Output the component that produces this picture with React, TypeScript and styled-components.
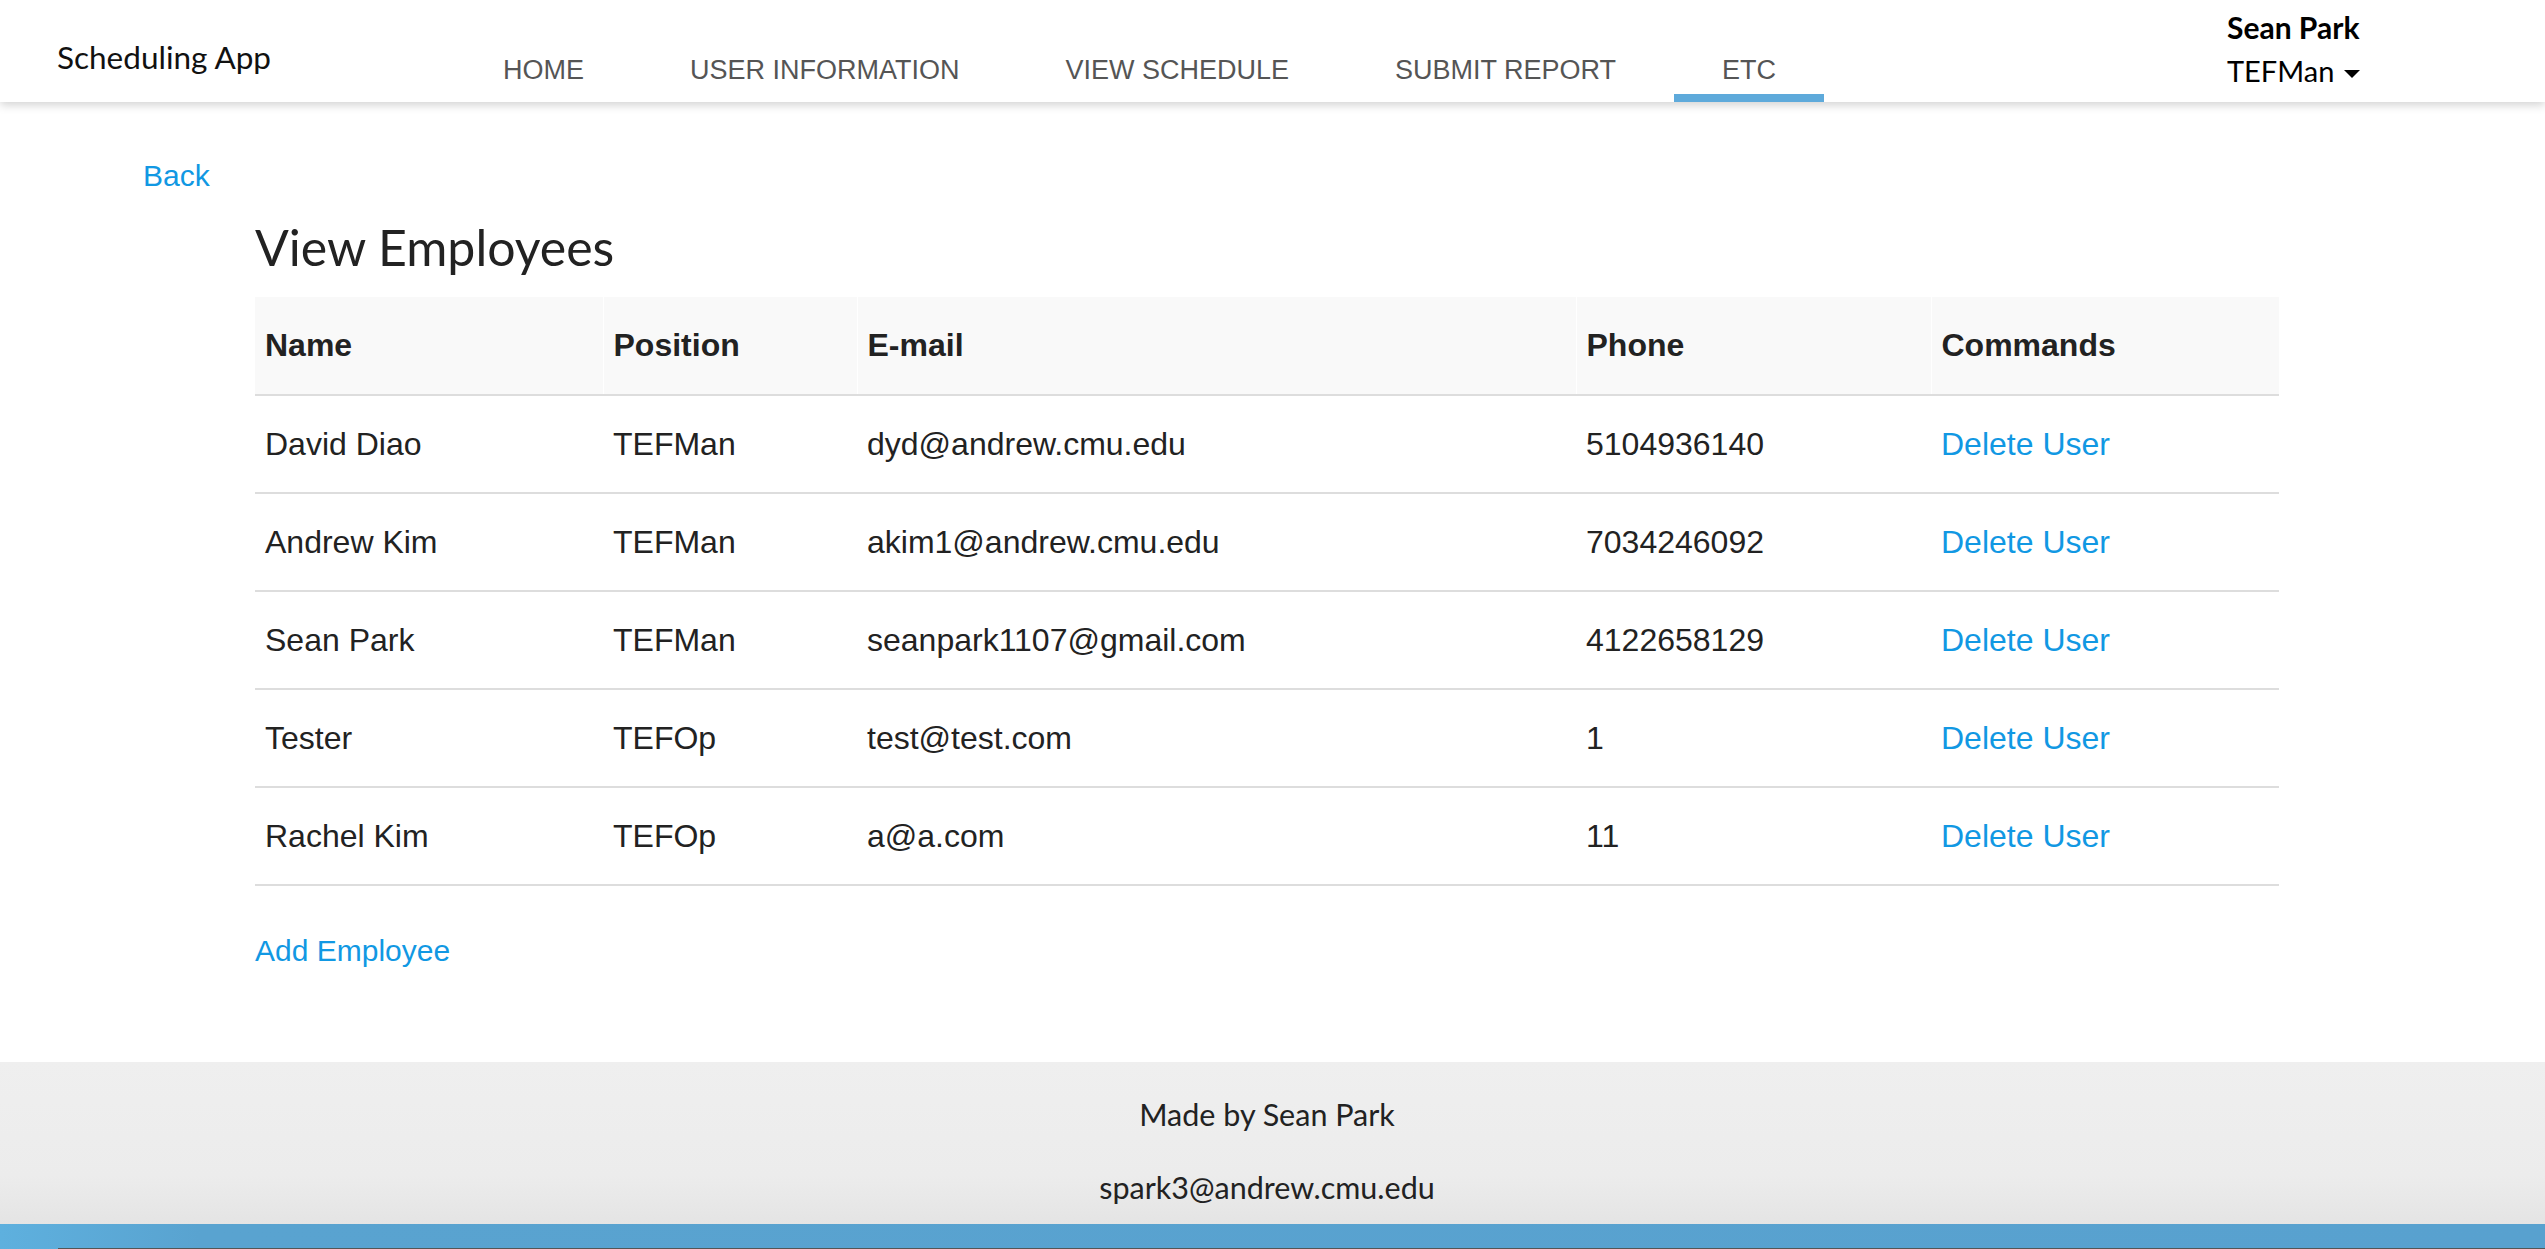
import React from "react";
import styled, { createGlobalStyle } from "styled-components";

const GlobalStyle = createGlobalStyle`
  html, body { margin: 0; padding: 0; background: #ffffff; }
  body { font-family: "Liberation Sans", Arial, sans-serif; color: #222; }
  * { box-sizing: border-box; }
`;

const Page = styled.div`
  min-height: 100vh;
  display: flex;
  flex-direction: column;
`;

const Header = styled.header`
  position: relative;
  z-index: 1;
  height: 102px;
  display: flex;
  align-items: flex-start;
  background: #fff;
  box-shadow: 0 3px 9px rgba(0, 0, 0, 0.18);
`;

const Brand = styled.div`
  width: 455px;
  padding: 37px 0 0 57px;
  font-family: Lato, "Open Sans", sans-serif;
  font-size: 31.5px;
  line-height: 40px;
  color: #111;
`;

const Nav = styled.nav`
  display: flex;
  gap: 10px;
  height: 102px;
`;

const NavItem = styled.a<{ $active?: boolean }>`
  display: block;
  height: 102px;
  padding: 50px 48px 0;
  font-size: 27px;
  line-height: 40px;
  color: #555;
  text-transform: uppercase;
  text-decoration: none;
  border-bottom: 8px solid ${(p) => (p.$active ? "#5eaadb" : "transparent")};
`;

const UserBlock = styled.div`
  margin-left: auto;
  width: 318px;
  padding-top: 6px;
  font-family: Lato, "Open Sans", sans-serif;
  font-size: 29px;
  line-height: 43px;
  color: #000;
`;

const UserName = styled.div`
  font-size: 30px;
  font-weight: 700;
`;

const RoleRow = styled.div`
  display: flex;
  align-items: center;
`;

const Caret = styled.span`
  display: inline-block;
  margin: 6px 0 0 10px;
  width: 0;
  height: 0;
  border-left: 8px solid transparent;
  border-right: 8px solid transparent;
  border-top: 8px solid #000;
`;

const Main = styled.main`
  padding: 54px 143px 0;
`;

const Link = styled.a`
  display: inline-block;
  font-size: 30px;
  line-height: 40px;
  color: #1198e3;
  text-decoration: none;
  cursor: pointer;
`;

const CellLink = styled(Link)`
  font-size: inherit;
`;

const Section = styled.section`
  margin-left: 112px;
  width: 2024px;
  display: flex;
  flex-direction: column;
  align-items: flex-start;
`;

const Title = styled.h1`
  margin: 21px 0 20px;
  font-family: Lato, "Open Sans", sans-serif;
  font-weight: 400;
  font-size: 50px;
  line-height: 60px;
  color: #222;
`;

const Table = styled.table`
  width: 2024px;
  table-layout: fixed;
  border-collapse: collapse;
  font-size: 32px;
  margin-bottom: 45px;
`;

const HeadRow = styled.tr`
  background: #f9f9f9;
  border-bottom: 2px solid #dddddd;
`;

const Th = styled.th`
  height: 98px;
  padding: 0 10px;
  text-align: left;
  font-weight: 700;
  color: #222;
  border-left: 1px solid #fff;
  &:first-child { border-left: none; }
`;

const Row = styled.tr`
  border-bottom: 2px solid #dddddd;
`;

const Td = styled.td`
  height: 98px;
  padding: 0 10px;
  color: #222;
  white-space: nowrap;
`;

const Footer = styled.footer`
  margin-top: auto;
  display: flex;
  flex-direction: column;
`;

const FooterBody = styled.div`
  height: 162px;
  padding: 16px 11px 0 0;
  background: linear-gradient(to bottom, #efefef 0%, #ececec 70%, #e4e4e4 100%);
  text-align: center;
  font-family: Lato, "Open Sans", sans-serif;
  font-size: 30.5px;
  line-height: 73px;
  color: #222;
`;

const BlueBar = styled.div`
  height: 25px;
  display: flex;
  flex-direction: column;
  justify-content: flex-end;
  background: linear-gradient(to right, #5eb0de 0px, #59a3d0 200px, #58a1cf 100%);
`;

const BarEdge = styled.div`
  margin-left: 58px;
  height: 1px;
  background: #555;
`;

const employees = [
  { name: "David Diao", position: "TEFMan", email: "dyd@andrew.cmu.edu", phone: "5104936140" },
  { name: "Andrew Kim", position: "TEFMan", email: "akim1@andrew.cmu.edu", phone: "7034246092" },
  { name: "Sean Park", position: "TEFMan", email: "seanpark1107@gmail.com", phone: "4122658129" },
  { name: "Tester", position: "TEFOp", email: "test@test.com", phone: "1" },
  { name: "Rachel Kim", position: "TEFOp", email: "a@a.com", phone: "11" },
];

const navItems = ["Home", "User Information", "View Schedule", "Submit Report", "Etc"];

export default function App() {
  return (
    <Page>
      <GlobalStyle />
      <Header>
        <Brand>Scheduling App</Brand>
        <Nav>
          {navItems.map((n) => (
            <NavItem key={n} $active={n === "Etc"}>
              {n}
            </NavItem>
          ))}
        </Nav>
        <UserBlock>
          <UserName>Sean Park</UserName>
          <RoleRow>
            TEFMan
            <Caret />
          </RoleRow>
        </UserBlock>
      </Header>
      <Main>
        <Link>Back</Link>
        <Section>
          <Title>View Employees</Title>
          <Table>
            <colgroup>
              <col style={{ width: 348 }} />
              <col style={{ width: 254 }} />
              <col style={{ width: 719 }} />
              <col style={{ width: 355 }} />
              <col style={{ width: 348 }} />
            </colgroup>
            <thead>
              <HeadRow>
                <Th>Name</Th>
                <Th>Position</Th>
                <Th>E-mail</Th>
                <Th>Phone</Th>
                <Th>Commands</Th>
              </HeadRow>
            </thead>
            <tbody>
              {employees.map((e) => (
                <Row key={e.email}>
                  <Td>{e.name}</Td>
                  <Td>{e.position}</Td>
                  <Td>{e.email}</Td>
                  <Td>{e.phone}</Td>
                  <Td>
                    <CellLink>Delete User</CellLink>
                  </Td>
                </Row>
              ))}
            </tbody>
          </Table>
          <Link>Add Employee</Link>
        </Section>
      </Main>
      <Footer>
        <FooterBody>
          <div>Made by Sean Park</div>
          <div>spark3@andrew.cmu.edu</div>
        </FooterBody>
        <BlueBar>
          <BarEdge />
        </BlueBar>
      </Footer>
    </Page>
  );
}
